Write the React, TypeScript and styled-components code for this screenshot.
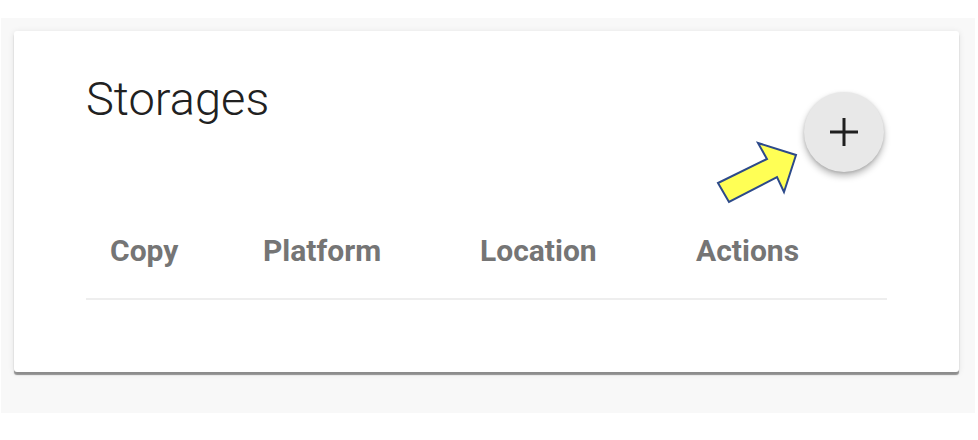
import React from "react";
import styled, { createGlobalStyle } from "styled-components";

const GlobalStyle = createGlobalStyle`
  html, body {
    margin: 0;
    padding: 0;
    background: #ffffff;
    font-family: Roboto, "Liberation Sans", Arial, sans-serif;
  }
  * { box-sizing: border-box; }
`;

const Page = styled.div`
  width: 978px;
  height: 440px;
  padding: 18px 3px 0 1px;
`;

const Backdrop = styled.div`
  width: 974px;
  height: 395px;
  background: #f8f8f8;
  padding: 13px 16px 0 13px;
`;

const Card = styled.section`
  position: relative;
  width: 945px;
  height: 341px;
  background: #ffffff;
  border-radius: 3px;
  box-shadow: 0 3px 1px rgba(0, 0, 0, 0.4), 0 1px 6px rgba(0, 0, 0, 0.1);
  padding: 44px 72px 0 72px;
`;

const Header = styled.div`
  display: flex;
  justify-content: space-between;
  align-items: flex-start;
`;

const Title = styled.h1`
  margin: 0;
  font-size: 47px;
  line-height: 47px;
  font-weight: 300;
  color: #212121;
  letter-spacing: 0;
`;

const Fab = styled.button`
  width: 80px;
  height: 80px;
  margin: 17px 3px 0 0;
  border: none;
  border-radius: 50%;
  background: #e8e8e8;
  box-shadow: 0 4px 7px rgba(0, 0, 0, 0.28), 0 1px 3px rgba(0, 0, 0, 0.12);
  display: flex;
  align-items: center;
  justify-content: center;
  padding: 0;
  cursor: pointer;
`;

const Table = styled.div`
  display: grid;
  grid-template-columns: 153px 217px 216px 1fr;
  margin-top: 64px;
`;

const HeadCell = styled.div`
  padding: 0 0 32px 24px;
  font-size: 30px;
  line-height: 30px;
  font-weight: 700;
  color: #757575;
  border-bottom: 2px solid #eeeeee;
  white-space: nowrap;
`;

const Annotation = styled.svg`
  position: absolute;
  left: 700px;
  top: 108px;
  width: 90px;
  height: 70px;
  overflow: visible;
`;

export default function App() {
  const columns = ["Copy", "Platform", "Location", "Actions"];
  return (
    <>
      <GlobalStyle />
      <Page>
        <Backdrop>
          <Card>
            <Header>
              <Title>Storages</Title>
              <Fab aria-label="Add storage">
                <svg width="30" height="30" viewBox="0 0 30 30">
                  <path d="M15 1 V29 M1 15 H29" stroke="#1f1f1f" strokeWidth="3" fill="none" />
                </svg>
              </Fab>
            </Header>
            <Table>
              {columns.map((c) => (
                <HeadCell key={c}>{c}</HeadCell>
              ))}
            </Table>
            <Annotation viewBox="0 0 90 70">
              <polygon
                points="4,44 15,63 63,38 70,53 82,16 44,4 53,20"
                fill="#ffff55"
                stroke="#2d4a8a"
                strokeWidth="2"
                strokeLinejoin="miter"
              />
            </Annotation>
          </Card>
        </Backdrop>
      </Page>
    </>
  );
}
